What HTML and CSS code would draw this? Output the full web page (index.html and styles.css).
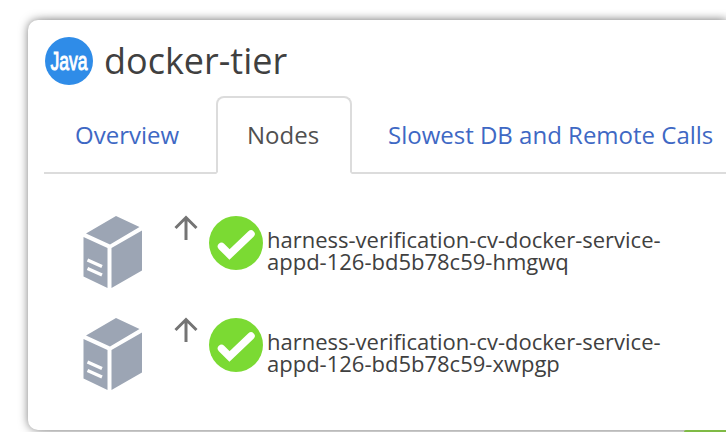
FILE: index.html
```html
<!DOCTYPE html>
<html lang="en">
<head>
<meta charset="utf-8">
<title>docker-tier</title>
<link rel="stylesheet" href="styles.css">
</head>
<body>
<svg class="defs" width="0" height="0" aria-hidden="true">
  <symbol id="cube" viewBox="0 0 60 74">
    <path d="M3.5 18.5 33.5 1 57 12 27.500 29.500ZM1 22 25 33V73L1 61.500ZM29 33 59.500 15.500V55.500L29 73Z" fill="#9ca5b4"/>
    <path d="M5 45 19.500 51.500M5 53.500 19.500 60" stroke="#fff" stroke-width="3.300"/>
  </symbol>
  <symbol id="up" viewBox="0 0 24 26">
    <path d="M12 25V3M1.500 13 12 2.500 22.500 13" fill="none" stroke="#747474" stroke-width="3"/>
  </symbol>
  <symbol id="ok" viewBox="0 0 54 54">
    <circle cx="27" cy="27" r="27" fill="#7bda33"/>
    <path d="M12.500 30.500 20.500 38.500 42 18" fill="none" stroke="#fff" stroke-width="7.500" stroke-linecap="round"/>
  </symbol>
</svg>
<main class="card">
  <header class="header">
    <svg class="java" viewBox="0 0 48 48"><circle cx="24" cy="24" r="24" fill="#2f8ce8"/><text class="java-text" x="5.500" y="32.500" textLength="37" lengthAdjust="spacingAndGlyphs">Java</text></svg>
    <h1 class="title">docker-tier</h1>
  </header>
  <nav class="tabs">
    <a class="tab">Overview</a>
    <a class="tab active">Nodes</a>
    <a class="tab">Slowest DB and Remote Calls</a>
  </nav>
  <ul class="nodes">
    <li class="node">
      <svg class="cube"><use href="#cube"/></svg>
      <svg class="up"><use href="#up"/></svg>
      <svg class="ok"><use href="#ok"/></svg>
      <span class="name">harness-verification-cv-docker-service-<br>appd-126-bd5b78c59-hmgwq</span>
    </li>
    <li class="node">
      <svg class="cube"><use href="#cube"/></svg>
      <svg class="up"><use href="#up"/></svg>
      <svg class="ok"><use href="#ok"/></svg>
      <span class="name">harness-verification-cv-docker-service-<br>appd-126-bd5b78c59-xwpgp</span>
    </li>
  </ul>
</main>
<div class="next-status"></div>
</body>
</html>
```
FILE: styles.css
```css
* { box-sizing: border-box; }
body {
  margin: 0;
  height: 432px;
  padding: 20px 0 0 28px;
  overflow: hidden;
  background: #fff;
  color: #404040;
  font-family: "Open Sans", "Noto Sans", sans-serif;
}
.defs { position: absolute; }
.card {
  width: 100%;
  height: 410px;
  padding: 17px 0 0 16px;
  border-radius: 10px 0 0 10px;
  background: #fff;
  box-shadow: 0 0 10px rgba(0, 0, 0, .5), 12px 0 10px rgba(0, 0, 0, .1);
}
.header { display: flex; align-items: center; height: 48px; }
.java { width: 48px; height: 48px; margin-left: 1px; }
.java-text { font: 26px "Liberation Sans", sans-serif; fill: #fff; stroke: #fff; stroke-width: 1px; }
.title { margin: 0 0 0 11px; font-size: 36px; font-weight: 400; line-height: 48px; white-space: nowrap; }
.tabs { display: flex; height: 89px; padding-top: 11px; background: linear-gradient(#dcdcdc, #dcdcdc) 0 100% / 100% 2px no-repeat; }
.tab {
  flex: none;
  height: 78px;
  border: 2px solid transparent;
  padding: 0 29px;
  font-size: 24px;
  line-height: 74px;
  color: #3e68c4;
  white-space: nowrap;
}
.tab:first-child { width: 172px; }
.active { width: 136px; border-color: #dcdcdc; border-bottom-color: #fff; border-radius: 8px 8px 0 0; background: #fff; color: #505050; }
.tab:last-child { padding: 0 0 0 34px; border-right: 0; }
.nodes { margin: 0; padding: 41px 0 0 38px; list-style: none; }
.node { display: flex; align-items: flex-start; height: 102px; }
.node svg { flex: none; }
.cube { width: 61px; height: 74px; }
.up { width: 24px; height: 26px; margin-left: 31px; }
.ok { width: 54px; height: 54px; margin: 1px 0 0 11px; }
.name { margin: 13px 0 0 4px; font-size: 22px; line-height: 22px; white-space: nowrap; }
.next-status { position: absolute; left: 684px; top: 430px; width: 42px; height: 2px; border-radius: 4px 0 0 0; background: #7fba45; }
```
